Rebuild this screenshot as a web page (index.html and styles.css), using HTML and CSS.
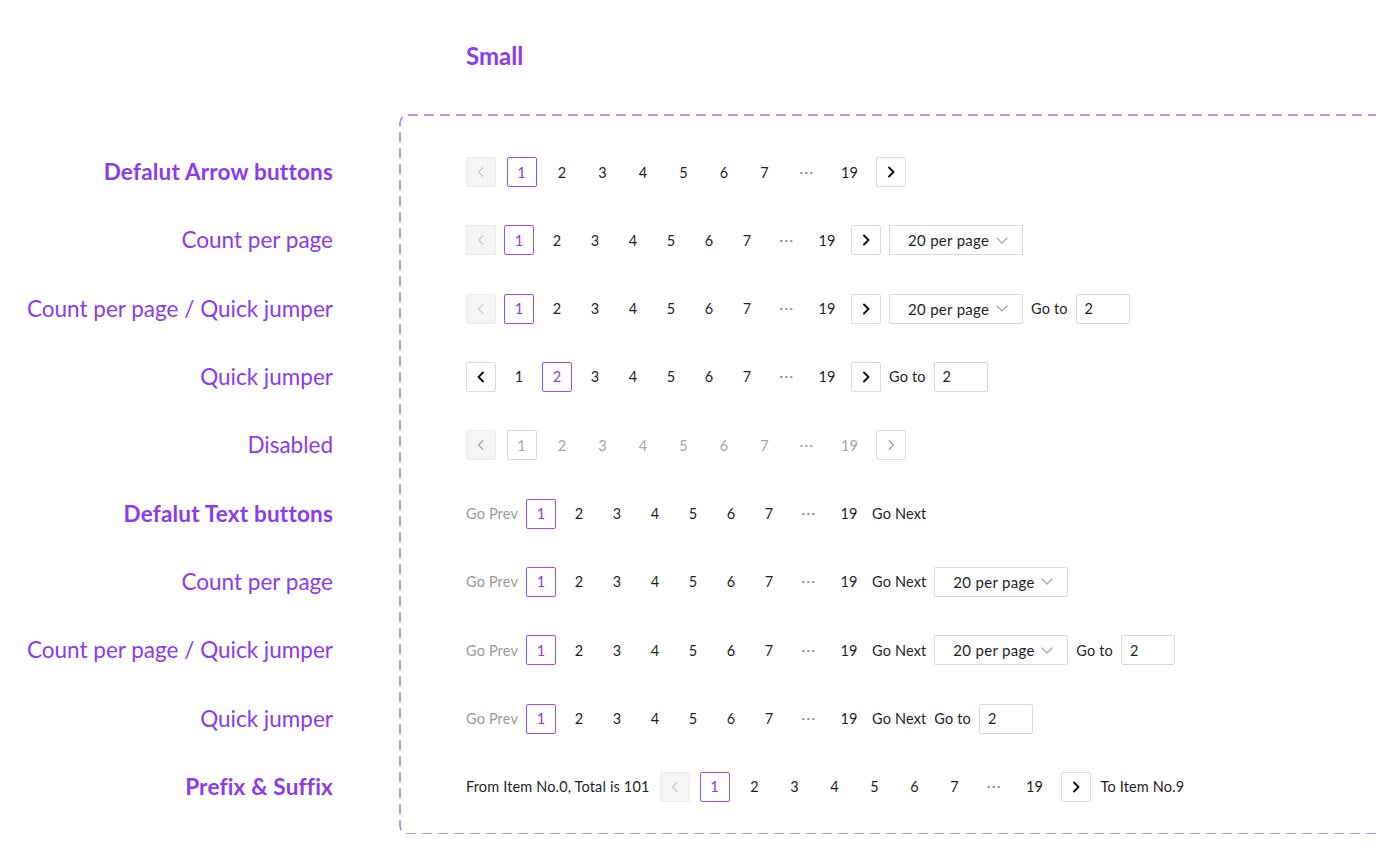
FILE: index.html
```html
<!DOCTYPE html>
<html>
<head>
<meta charset="utf-8">
<link rel="stylesheet" href="styles.css">
</head>
<body>
<div class="page">
  <div class="title">Small</div>
  <div class="main">
    <div class="labels">
      <div class="label bold">Defalut Arrow buttons</div>
      <div class="label">Count per page</div>
      <div class="label">Count per page / Quick jumper</div>
      <div class="label">Quick jumper</div>
      <div class="label">Disabled</div>
      <div class="label bold">Defalut Text buttons</div>
      <div class="label">Count per page</div>
      <div class="label">Count per page / Quick jumper</div>
      <div class="label">Quick jumper</div>
      <div class="label bold">Prefix &amp; Suffix</div>
    </div>
    <div class="box">
      <svg class="frame" aria-hidden="true"><rect x="0" y="0" width="100%" height="100%" rx="8" ry="8"/></svg>

      <!-- 1 -->
      <div class="pg wide">
        <span class="item arrow off"><svg viewBox="0 0 16 16" width="16" height="16"><path d="M10 3.5 5.5 8 10 12.5"/></svg></span>
        <span class="item active">1</span>
        <span class="item">2</span><span class="item">3</span><span class="item">4</span><span class="item">5</span><span class="item">6</span><span class="item">7</span>
        <span class="item dots">•••</span>
        <span class="item">19</span>
        <span class="item arrow next"><svg viewBox="0 0 16 16" width="16" height="16"><path d="M6 3.5 10.5 8 6 12.5"/></svg></span>
      </div>

      <!-- 2 -->
      <div class="pg">
        <span class="item arrow off"><svg viewBox="0 0 16 16" width="16" height="16"><path d="M10 3.5 5.5 8 10 12.5"/></svg></span>
        <span class="item active">1</span>
        <span class="item">2</span><span class="item">3</span><span class="item">4</span><span class="item">5</span><span class="item">6</span><span class="item">7</span>
        <span class="item dots">•••</span>
        <span class="item">19</span>
        <span class="item arrow next"><svg viewBox="0 0 16 16" width="16" height="16"><path d="M6 3.5 10.5 8 6 12.5"/></svg></span>
        <span class="select">20 per page<svg viewBox="0 0 12 7" width="12" height="7"><path d="M1 1 6 6 11 1"/></svg></span>
      </div>

      <!-- 3 -->
      <div class="pg">
        <span class="item arrow off"><svg viewBox="0 0 16 16" width="16" height="16"><path d="M10 3.5 5.5 8 10 12.5"/></svg></span>
        <span class="item active">1</span>
        <span class="item">2</span><span class="item">3</span><span class="item">4</span><span class="item">5</span><span class="item">6</span><span class="item">7</span>
        <span class="item dots">•••</span>
        <span class="item">19</span>
        <span class="item arrow next"><svg viewBox="0 0 16 16" width="16" height="16"><path d="M6 3.5 10.5 8 6 12.5"/></svg></span>
        <span class="select">20 per page<svg viewBox="0 0 12 7" width="12" height="7"><path d="M1 1 6 6 11 1"/></svg></span>
        <span class="txt">Go to</span>
        <span class="input">2</span>
      </div>

      <!-- 4 -->
      <div class="pg">
        <span class="item arrow"><svg viewBox="0 0 16 16" width="16" height="16"><path d="M10 3.5 5.5 8 10 12.5"/></svg></span>
        <span class="item">1</span>
        <span class="item active">2</span>
        <span class="item">3</span><span class="item">4</span><span class="item">5</span><span class="item">6</span><span class="item">7</span>
        <span class="item dots">•••</span>
        <span class="item">19</span>
        <span class="item arrow next"><svg viewBox="0 0 16 16" width="16" height="16"><path d="M6 3.5 10.5 8 6 12.5"/></svg></span>
        <span class="txt">Go to</span>
        <span class="input">2</span>
      </div>

      <!-- 5 disabled -->
      <div class="pg wide disabled">
        <span class="item arrow off"><svg viewBox="0 0 16 16" width="16" height="16"><path d="M10 3.5 5.5 8 10 12.5"/></svg></span>
        <span class="item active">1</span>
        <span class="item">2</span><span class="item">3</span><span class="item">4</span><span class="item">5</span><span class="item">6</span><span class="item">7</span>
        <span class="item dots">•••</span>
        <span class="item">19</span>
        <span class="item arrow next thin"><svg viewBox="0 0 16 16" width="16" height="16"><path d="M6 3.5 10.5 8 6 12.5"/></svg></span>
      </div>

      <!-- 6 text -->
      <div class="pg">
        <span class="txt muted">Go Prev</span>
        <span class="item active">1</span>
        <span class="item">2</span><span class="item">3</span><span class="item">4</span><span class="item">5</span><span class="item">6</span><span class="item">7</span>
        <span class="item dots">•••</span>
        <span class="item">19</span>
        <span class="txt">Go Next</span>
      </div>

      <!-- 7 -->
      <div class="pg">
        <span class="txt muted">Go Prev</span>
        <span class="item active">1</span>
        <span class="item">2</span><span class="item">3</span><span class="item">4</span><span class="item">5</span><span class="item">6</span><span class="item">7</span>
        <span class="item dots">•••</span>
        <span class="item">19</span>
        <span class="txt">Go Next</span>
        <span class="select">20 per page<svg viewBox="0 0 12 7" width="12" height="7"><path d="M1 1 6 6 11 1"/></svg></span>
      </div>

      <!-- 8 -->
      <div class="pg">
        <span class="txt muted">Go Prev</span>
        <span class="item active">1</span>
        <span class="item">2</span><span class="item">3</span><span class="item">4</span><span class="item">5</span><span class="item">6</span><span class="item">7</span>
        <span class="item dots">•••</span>
        <span class="item">19</span>
        <span class="txt">Go Next</span>
        <span class="select">20 per page<svg viewBox="0 0 12 7" width="12" height="7"><path d="M1 1 6 6 11 1"/></svg></span>
        <span class="txt">Go to</span>
        <span class="input">2</span>
      </div>

      <!-- 9 -->
      <div class="pg">
        <span class="txt muted">Go Prev</span>
        <span class="item active">1</span>
        <span class="item">2</span><span class="item">3</span><span class="item">4</span><span class="item">5</span><span class="item">6</span><span class="item">7</span>
        <span class="item dots">•••</span>
        <span class="item">19</span>
        <span class="txt">Go Next</span>
        <span class="txt">Go to</span>
        <span class="input">2</span>
      </div>

      <!-- 10 -->
      <div class="pg wide tight">
        <span class="txt">From Item No.0, Total is 101</span>
        <span class="item arrow off"><svg viewBox="0 0 16 16" width="16" height="16"><path d="M10 3.5 5.5 8 10 12.5"/></svg></span>
        <span class="item active">1</span>
        <span class="item">2</span><span class="item">3</span><span class="item">4</span><span class="item">5</span><span class="item">6</span><span class="item">7</span>
        <span class="item dots">•••</span>
        <span class="item">19</span>
        <span class="item arrow next"><svg viewBox="0 0 16 16" width="16" height="16"><path d="M6 3.5 10.5 8 6 12.5"/></svg></span>
        <span class="txt">To Item No.9</span>
      </div>
    </div>
  </div>
</div>
</body>
</html>
```

FILE: styles.css
```css
html, body {
  margin: 0;
  padding: 0;
  background: #ffffff;
  overflow: hidden;
}

body {
  font-family: "Lato", "Noto Sans", "DejaVu Sans", sans-serif;
  color: #1f1f1f;
}

.page {
  padding-top: 40px;
}

.title {
  margin-left: 466px;
  font-size: 24px;
  line-height: 32px;
  font-weight: 700;
  color: #8a3bf0;
}

.main {
  display: flex;
  margin-top: 43px;
}

.labels {
  width: 333px;
  flex: none;
  padding-top: 42px;
  display: flex;
  flex-direction: column;
  gap: 38.33px;
}

.label {
  height: 30px;
  line-height: 30px;
  text-align: right;
  font-size: 22.5px;
  color: #8a3bf0;
  white-space: nowrap;
}

.label.bold {
  font-size: 22.5px;
  font-weight: 700;
  letter-spacing: 0.2px;
}

.box {
  position: relative;
  flex: none;
  margin-left: 67px;
  width: 1000px;
  box-sizing: border-box;
  padding: 42px 0 32px 66px;
  display: flex;
  flex-direction: column;
  gap: 38.33px;
}

.frame {
  position: absolute;
  left: 0;
  top: 0;
  width: 100%;
  height: 100%;
  overflow: visible;
  pointer-events: none;
}

.frame rect {
  fill: none;
  stroke: #a86ef7;
  stroke-width: 1.5;
  stroke-dasharray: 10 6;
}

.pg {
  display: flex;
  align-items: center;
  gap: 8px;
  height: 30px;
  font-size: 14.5px;
  white-space: nowrap;
}

.pg.wide {
  gap: 10.5px;
}

.pg.tight {
  gap: 10px;
}

.item {
  box-sizing: border-box;
  min-width: 30px;
  height: 30px;
  display: flex;
  align-items: center;
  justify-content: center;
  border: 1px solid transparent;
  border-radius: 2px;
  color: #1f1f1f;
}

.item.active {
  border-color: #9450f5;
  color: #8a3bf0;
}

.item.dots {
  min-width: 34px;
  font-size: 6px;
  letter-spacing: 1.5px;
  color: #8a8a8a;
}

.pg.tight .item.dots {
  min-width: 30px;
}

.item.arrow {
  background: #ffffff;
  border-color: #dcdcdc;
  color: #111;
}

.item.arrow.next {
  margin-left: 1px;
}

.item.arrow svg path {
  fill: none;
  stroke: currentColor;
  stroke-width: 1.9;
  stroke-linecap: round;
  stroke-linejoin: round;
}

.item.arrow.off {
  background: #f5f5f5;
  border-color: #ececec;
  color: #c8c8c8;
}

.item.arrow.off svg path,
.item.arrow.thin svg path {
  stroke-width: 1.1;
}

.pg.disabled .item {
  color: #a6a6a6;
}

.pg.disabled .item.active {
  border-color: #d9d9d9;
  color: #a6a6a6;
}

.pg.disabled .item.arrow.thin {
  color: #9a9a9a;
}

.pg.disabled .item.dots {
  color: #a6a6a6;
}

.txt {
  color: #1f1f1f;
  letter-spacing: 0.15px;
}

.txt.muted {
  color: #9a9a9a;
}

.select {
  box-sizing: border-box;
  width: 134px;
  height: 30px;
  border: 1px solid #d9d9d9;
  border-radius: 2px;
  display: flex;
  align-items: center;
  justify-content: space-between;
  padding: 0 14px 0 18px;
  font-size: 15px;
  letter-spacing: 0.3px;
  color: #1f1f1f;
}

.select svg path {
  fill: none;
  stroke: #a8a8a8;
  stroke-width: 1.2;
  stroke-linecap: round;
  stroke-linejoin: round;
}

.input {
  box-sizing: border-box;
  width: 54px;
  height: 30px;
  border: 1px solid #d9d9d9;
  border-radius: 2px;
  display: flex;
  align-items: center;
  padding-left: 8px;
  color: #1f1f1f;
}
```
